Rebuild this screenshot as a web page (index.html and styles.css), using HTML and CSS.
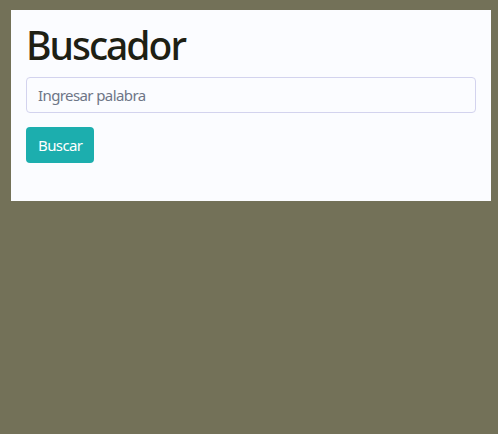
FILE: index.html
```html
<!DOCTYPE html>
<html lang="es">
<head>
<meta charset="utf-8">
<title>Buscador</title>
<link rel="stylesheet" href="styles.css">
</head>
<body>
<div class="card">
  <h1 class="title">Buscador</h1>
  <form class="search">
    <input class="field" type="text" placeholder="Ingresar palabra">
    <button class="btn" type="button">Buscar</button>
  </form>
</div>
</body>
</html>
```
FILE: styles.css
```css
html, body {
  margin: 0;
  padding: 0;
}
body {
  background: #737158;
  font-family: "Noto Sans", "Open Sans", sans-serif;
  padding: 10px 7px 0 11px;
  height: 434px;
  box-sizing: border-box;
}
.card {
  background: #fbfcff;
  width: 480px;
  height: 191px;
  box-sizing: border-box;
  padding: 12px 15px 0 15px;
}
.title {
  margin: 0 0 9px 0;
  font-size: 39px;
  font-weight: 500;
  line-height: 46px;
  letter-spacing: -2px;
  color: #1e2013;
}
.search {
  display: flex;
  flex-direction: column;
  align-items: flex-start;
  gap: 14px;
}
.field {
  width: 100%;
  height: 36px;
  box-sizing: border-box;
  border: 1px solid #d3d3ee;
  border-radius: 4px;
  background: #fbfcff;
  padding: 0 11px;
  font-family: inherit;
  font-size: 15px;
  letter-spacing: -0.6px;
  color: #495057;
}
.field::placeholder {
  color: #6e7687;
}
.btn {
  height: 36px;
  padding: 0 12px;
  border: none;
  border-radius: 4px;
  background: #1caeae;
  color: #ffffff;
  font-family: inherit;
  font-size: 15px;
  letter-spacing: -0.6px;
}
```
